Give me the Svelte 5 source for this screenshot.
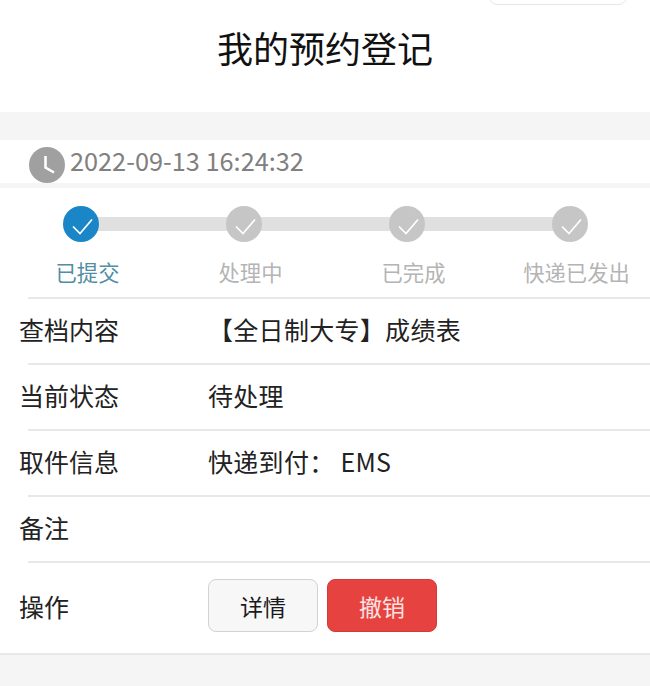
<script>
  const steps = [
    { label: '已提交', active: true },
    { label: '处理中' },
    { label: '已完成' },
    { label: '快递已发出' }
  ];
  const rows = [
    { key: '查档内容', value: '【全日制大专】成绩表' },
    { key: '当前状态', value: '待处理' },
    { key: '取件信息', value: '快递到付： EMS' },
    { key: '备注', value: '' }
  ];
</script>

<div class="page">
  <div class="topbar"><div class="capsule"></div></div>
  <h1>我的预约登记</h1>
  <div class="band"></div>

  <div class="time">
    <svg class="clock" viewBox="0 0 36 36" width="36" height="36">
      <circle cx="18" cy="18" r="18" fill="#a0a0a0" />
      <path d="M16.5 9 V20.5 L25 25.5" fill="none" stroke="#fff" stroke-width="2.6" />
    </svg>
    <span>2022-09-13 16:24:32</span>
  </div>

  <div class="steps">
    <div class="track"></div>
    {#each steps as step}
      <div class="step" class:active={step.active}>
        <svg class="dot" viewBox="0 0 36 36" width="36" height="36">
          <circle cx="18" cy="18" r="18" />
          <path d="M10 20.5 L17 27.5 L29 13.5" fill="none" stroke="#fff" stroke-width="1.7" />
        </svg>
        <div class="label">{step.label}</div>
      </div>
    {/each}
  </div>

  <div class="table">
    {#each rows as row}
      <div class="row">
        <div class="key">{row.key}</div>
        <div class="value">{row.value}</div>
      </div>
    {/each}
    <div class="row actions">
      <div class="key">操作</div>
      <div class="buttons">
        <button class="btn">详情</button>
        <button class="btn danger">撤销</button>
      </div>
    </div>
  </div>

  <div class="footer"></div>
</div>

<style>
  :global(body) {
    margin: 0;
    background: #fff;
    font-family: "Noto Sans CJK SC", "Liberation Sans", sans-serif;
  }

  .page {
    width: 650px;
    height: 686px;
    overflow: hidden;
    display: flex;
    flex-direction: column;
  }

  .topbar {
    height: 5px;
    display: flex;
    justify-content: flex-end;
    padding-right: 22px;
  }

  .capsule {
    width: 140px;
    height: 20px;
    margin-top: -15px;
    box-sizing: border-box;
    border: 1px solid #e6e6e6;
    border-radius: 14px;
  }

  h1 {
    margin: 0;
    height: 107px;
    box-sizing: border-box;
    padding-top: 19px;
    text-align: center;
    font-size: 36px;
    line-height: 46px;
    font-weight: 400;
    color: #111;
  }

  .band {
    height: 28px;
    background: #f5f5f5;
  }

  .time {
    height: 43px;
    display: flex;
    align-items: center;
    gap: 5px;
    padding-left: 29px;
    border-bottom: 5px solid #f5f5f5;
    font-size: 25.3px;
    color: #808080;
  }

  .time span {
    margin-bottom: 4px;
  }

  .clock {
    flex: none;
    margin-top: 7px;
  }

  .steps {
    position: relative;
    height: 109px;
    display: flex;
    justify-content: space-between;
    box-sizing: border-box;
    padding: 18px 7px 0;
  }

  .track {
    position: absolute;
    left: 82px;
    right: 82px;
    top: 29px;
    height: 14px;
    background: #e0e0e0;
  }

  .step {
    position: relative;
    width: 147px;
    display: flex;
    flex-direction: column;
    align-items: center;
    color: #b4b4b4;
  }

  .step .dot circle {
    fill: #c6c6c6;
  }

  .step.active {
    color: #4f8ea3;
  }

  .step.active .dot circle {
    fill: #1a86c8;
  }

  .label {
    margin-top: 15px;
    padding-left: 14px;
    font-size: 21.3px;
    line-height: 30px;
    white-space: nowrap;
  }

  .row {
    height: 66px;
    display: flex;
    align-items: center;
    box-sizing: border-box;
    padding: 2px 0 4px 19px;
    background: linear-gradient(#e8e8e8, #e8e8e8) 28px 0 / 100% 2px no-repeat;
    font-size: 25px;
    color: #222;
  }

  .key {
    width: 189px;
    flex: none;
  }

  .value {
    letter-spacing: 0.3px;
  }

  .actions {
    height: 94px;
    padding: 0 0 2px 19px;
    border-bottom: 2px solid #e8e8e8;
  }

  .buttons {
    display: flex;
    gap: 9px;
    margin-top: -1px;
  }

  .btn {
    width: 110px;
    height: 53px;
    padding: 0;
    box-sizing: border-box;
    border: 1px solid #d2d2d2;
    border-radius: 8px;
    background: #f7f7f7;
    color: #1a1a1a;
    font-family: inherit;
    font-size: 23px;
  }

  .danger {
    background: #e64340;
    border-color: #cf3c3a;
    color: #fbe3e2;
  }

  .footer {
    flex: 1;
    background: #f5f5f5;
  }
</style>
